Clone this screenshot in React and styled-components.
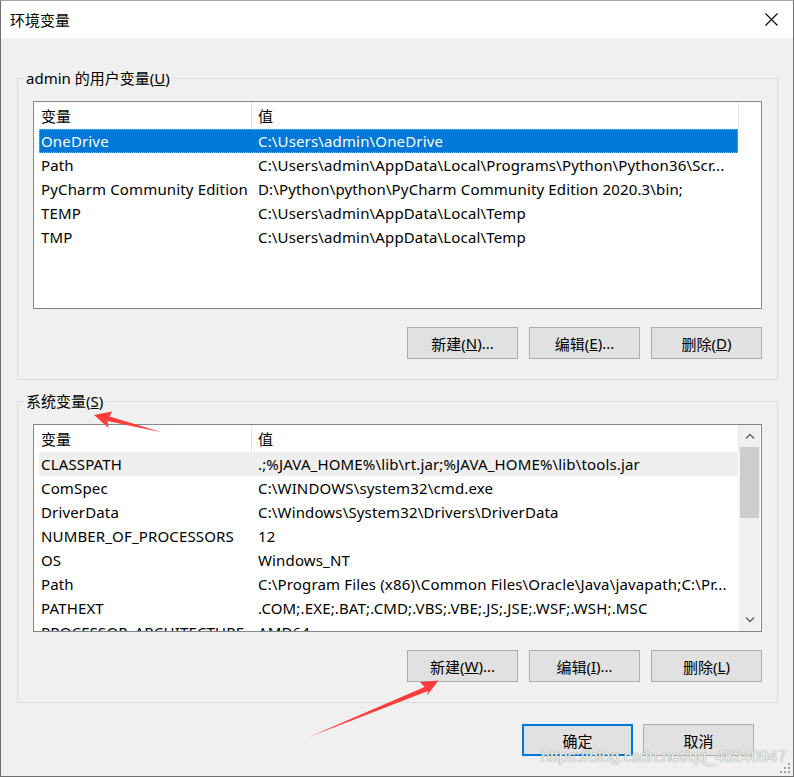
import React from 'react'
import styled, { createGlobalStyle } from 'styled-components'

const GlobalStyle = createGlobalStyle`
    body {
        margin: 0;
        font-family: "Noto Sans", "Noto Sans CJK SC", sans-serif;
        font-size: 15px;
        color: #000;
    }
`

const userVars = [
    ['OneDrive', 'C:\\Users\\admin\\OneDrive'],
    ['Path', 'C:\\Users\\admin\\AppData\\Local\\Programs\\Python\\Python36\\Scr...'],
    ['PyCharm Community Edition', 'D:\\Python\\python\\PyCharm Community Edition 2020.3\\bin;'],
    ['TEMP', 'C:\\Users\\admin\\AppData\\Local\\Temp'],
    ['TMP', 'C:\\Users\\admin\\AppData\\Local\\Temp'],
]

const sysVars = [
    ['CLASSPATH', '.;%JAVA_HOME%\\lib\\rt.jar;%JAVA_HOME%\\lib\\tools.jar'],
    ['ComSpec', 'C:\\WINDOWS\\system32\\cmd.exe'],
    ['DriverData', 'C:\\Windows\\System32\\Drivers\\DriverData'],
    ['NUMBER_OF_PROCESSORS', '12'],
    ['OS', 'Windows_NT'],
    ['Path', 'C:\\Program Files (x86)\\Common Files\\Oracle\\Java\\javapath;C:\\Pr...'],
    ['PATHEXT', '.COM;.EXE;.BAT;.CMD;.VBS;.VBE;.JS;.JSE;.WSF;.WSH;.MSC'],
    ['PROCESSOR_ARCHITECTURE', 'AMD64'],
]

function VarList({ rows, selected, hover, scroll }) {
    return (
        <List>
            <Table>
                <Header>
                    <HeadCell>变量</HeadCell>
                    <HeadCell wide>值</HeadCell>
                </Header>
                {rows.map(([name, value], i) => (
                    <Row key={i} selected={i === selected} hover={i === hover}>
                        <span>{name}</span>
                        <span>{value}</span>
                    </Row>
                ))}
            </Table>
            {scroll ? (
                <ScrollBar>
                    <ScrollArrow>
                        <svg width="10" height="6" viewBox="0 0 10 6"><path d="M1 5.5 L5 1.5 L9 5.5" fill="none" stroke="#606060" strokeWidth="1.3"/></svg>
                    </ScrollArrow>
                    <Thumb />
                    <ScrollArrow bottom>
                        <svg width="10" height="6" viewBox="0 0 10 6"><path d="M1 0.5 L5 4.5 L9 0.5" fill="none" stroke="#606060" strokeWidth="1.3"/></svg>
                    </ScrollArrow>
                </ScrollBar>
            ) : <Filler />}
        </List>
    )
}

function App() {
    return (
        <>
            <GlobalStyle />
            <Window>
                <TitleBar>
                    <span>环境变量</span>
                    <svg width="13" height="13" viewBox="0 0 13 13">
                        <path d="M0.5 0.5 L12.5 12.5 M12.5 0.5 L0.5 12.5" stroke="#000" strokeWidth="1.1"/>
                    </svg>
                </TitleBar>
                <Body>
                    <Group>
                        <Legend>admin 的用户变量(<u>U</u>)</Legend>
                        <VarList rows={userVars} selected={0} />
                        <ButtonRow>
                            <Button>新建(<u>N</u>)...</Button>
                            <Button>编辑(<u>E</u>)...</Button>
                            <Button>删除(<u>D</u>)</Button>
                        </ButtonRow>
                    </Group>
                    <Group second>
                        <Legend>系统变量(<u>S</u>)</Legend>
                        <VarList rows={sysVars} hover={0} scroll />
                        <ButtonRow>
                            <Button>新建(<u>W</u>)...</Button>
                            <Button>编辑(<u>I</u>)...</Button>
                            <Button>删除(<u>L</u>)</Button>
                        </ButtonRow>
                    </Group>
                    <Footer>
                        <Button primary>确定</Button>
                        <Button>取消</Button>
                    </Footer>
                </Body>
                <Arrows width="794" height="777" viewBox="0 0 794 777">
                    <polygon points="94,415 112,411.5 109.5,416.5 162.5,432.5 107.5,421 108.5,428" fill="#fd3c3c"/>
                    <polygon points="438.5,680.5 420,682 424.5,687 309,737 428,691 427,695.5" fill="#fd3c3c"/>
                </Arrows>
                <Watermark>https://blog.csdn.net/qq_48240947</Watermark>
                <Grip width="10" height="10" viewBox="0 0 10 10">
                    <rect x="8" y="0" width="2" height="2" fill="#a0a0a0"/>
                    <rect x="4" y="4" width="2" height="2" fill="#a0a0a0"/>
                    <rect x="8" y="4" width="2" height="2" fill="#a0a0a0"/>
                    <rect x="0" y="8" width="2" height="2" fill="#a0a0a0"/>
                    <rect x="4" y="8" width="2" height="2" fill="#a0a0a0"/>
                    <rect x="8" y="8" width="2" height="2" fill="#a0a0a0"/>
                </Grip>
            </Window>
        </>
    )
}

export default App

const Window = styled.div`
    position: relative;
    width: 794px;
    height: 777px;
    box-sizing: border-box;
    border: 1px solid #6f6f6f;
    border-top-color: #a8a8a8;
    background: #f0f0f0;
    overflow: hidden;
`

const TitleBar = styled.div`
    height: 37px;
    background: #fff;
    display: flex;
    align-items: center;
    justify-content: space-between;
    padding: 0 15px 0 9px;
    font-size: 15px;
`

const Body = styled.div`
    padding: 30px 15px 0 16px;
`

const Group = styled.fieldset`
    margin: ${p => p.second ? '11px' : '0'} 0 0 0;
    padding: 13px 15px 20px 15px;
    border: 1px solid #dcdcdc;
    min-width: 0;
`

const Legend = styled.legend`
    margin-left: -9px;
    padding: 0 2px;
    line-height: 20px;
    font-size: 15px;
`

const List = styled.div`
    display: flex;
    height: 208px;
    box-sizing: border-box;
    border: 1px solid #828790;
    background: #fff;
    overflow: hidden;
`

const Table = styled.div`
    width: 705px;
    flex: none;
`

const Header = styled.div`
    display: flex;
    height: 27px;
`

const HeadCell = styled.div`
    box-sizing: border-box;
    width: ${p => p.wide ? '487px' : '218px'};
    padding-left: ${p => p.wide ? '6px' : '7px'};
    padding-top: 2px;
    border-right: 1px solid #e5e5e5;
    line-height: 25px;
    white-space: nowrap;
`

const Row = styled.div`
    display: grid;
    grid-template-columns: 217px 1fr;
    margin-left: 5px;
    width: 699px;
    height: 24px;
    box-sizing: border-box;
    padding-left: 2px;
    line-height: 24px;
    letter-spacing: 0.15px;
    white-space: nowrap;
    overflow: hidden;
    background: ${p => p.selected ? '#0078d7' : p.hover ? '#efefef' : 'transparent'};
    color: ${p => p.selected ? '#fff' : '#000'};
    outline: ${p => p.selected ? '1px dotted #f0a050' : 'none'};
    outline-offset: -1px;
`

const Filler = styled.div`
    flex: 1;
`

const ScrollBar = styled.div`
    width: 21px;
    flex: none;
    background: #f0f0f0;
    display: flex;
    flex-direction: column;
`

const ScrollArrow = styled.div`
    height: 22px;
    display: flex;
    align-items: center;
    justify-content: center;
    margin-top: ${p => p.bottom ? 'auto' : '0'};
`

const Thumb = styled.div`
    height: 71px;
    margin: 0 1px;
    background: #cdcdcd;
`

const ButtonRow = styled.div`
    display: flex;
    justify-content: flex-end;
    gap: 11px;
    margin-top: 18px;
`

const Button = styled.div`
    width: 111px;
    height: 32px;
    box-sizing: border-box;
    display: flex;
    align-items: center;
    justify-content: center;
    background: #e1e1e1;
    border: ${p => p.primary ? '2px solid #0078d7' : '1px solid #adadad'};
    font-size: 15px;
    white-space: nowrap;
`

const Footer = styled.div`
    display: flex;
    justify-content: flex-end;
    gap: 10px;
    margin-top: 21px;
    padding-right: 24px;
`

const Arrows = styled.svg`
    position: absolute;
    left: -1px;
    top: -1px;
    pointer-events: none;
`

const Watermark = styled.div`
    position: absolute;
    left: 540px;
    top: 747px;
    font-family: "Liberation Sans", Arial, sans-serif;
    font-size: 16px;
    color: rgba(255, 255, 255, 0.85);
    text-shadow: 0 0 1px #9a9a9a, 0 0 1px #9a9a9a;
    white-space: nowrap;
`

const Grip = styled.svg`
    position: absolute;
    right: 3px;
    bottom: 3px;
`
